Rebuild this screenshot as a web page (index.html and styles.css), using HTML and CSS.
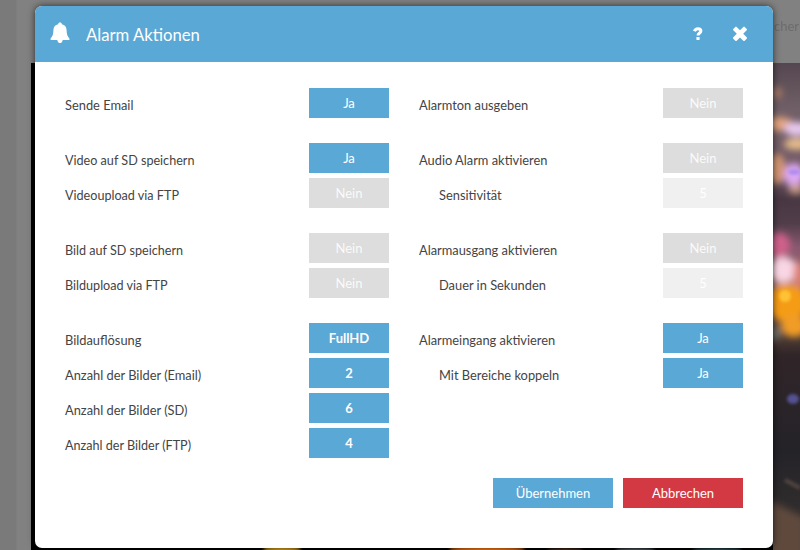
FILE: index.html
```
<!DOCTYPE html>
<html lang="de">
<head>
<meta charset="utf-8">
<title>Alarm Aktionen</title>
<link rel="stylesheet" href="styles.css">
</head>
<body>
<div class="backdrop">
  <div class="nav-text">cher</div>
  <svg class="scene" width="800" height="550" viewBox="0 0 800 550" aria-hidden="true">
    <defs>
      <filter id="soft" x="-60%" y="-60%" width="220%" height="220%"><feGaussianBlur stdDeviation="3.5"/></filter>
      <filter id="edge" x="-60%" y="-60%" width="220%" height="220%"><feGaussianBlur stdDeviation="1.5"/></filter>
      <linearGradient id="sky" x1="0" y1="62" x2="0" y2="550" gradientUnits="userSpaceOnUse">
        <stop offset="0" stop-color="#544650"/><stop offset=".1" stop-color="#716067"/>
        <stop offset=".22" stop-color="#755b67"/><stop offset=".28" stop-color="#483743"/>
        <stop offset=".33" stop-color="#503d49"/><stop offset=".38" stop-color="#8a5870"/>
        <stop offset=".48" stop-color="#a37263"/><stop offset=".54" stop-color="#61493b"/>
        <stop offset=".6" stop-color="#302528"/><stop offset=".8" stop-color="#242328"/>
        <stop offset=".92" stop-color="#312d2d"/><stop offset="1" stop-color="#3c332f"/>
      </linearGradient>
      <clipPath id="strip"><rect x="773" y="63" width="27" height="487"/></clipPath>
    </defs>
    <rect x="31" y="63" width="769" height="487" fill="#000"/>
    <g clip-path="url(#strip)">
      <rect x="773" y="62" width="27" height="488" fill="url(#sky)"/>
      <g filter="url(#soft)">
        <ellipse cx="777" cy="93" rx="5" ry="6" fill="#a77964"/>
        <ellipse cx="779" cy="124" rx="14" ry="7" fill="#e2a37b"/>
        <ellipse cx="797" cy="129" rx="13" ry="7" fill="#e7c9ef"/>
        <ellipse cx="797" cy="144" rx="13" ry="6" fill="#e6bd8b"/>
        <ellipse cx="777" cy="169" rx="9" ry="15" fill="#d0946f"/>
        <ellipse cx="794" cy="175" rx="10" ry="12" fill="#dda9f4"/>
        <ellipse cx="796" cy="189" rx="8" ry="5" fill="#c79b84"/>
        <ellipse cx="779" cy="245" rx="11" ry="12" fill="#cf608a"/>
        <ellipse cx="783" cy="270" rx="14" ry="13" fill="#f9d6e4"/>
        <ellipse cx="799" cy="275" rx="6" ry="13" fill="#dd8074"/>
        <ellipse cx="787" cy="303" rx="20" ry="19" fill="#f59c16"/>
        <ellipse cx="794" cy="326" rx="13" ry="11" fill="#f09c26"/>
        <ellipse cx="775" cy="333" rx="6" ry="7" fill="#68706a"/>
        <path d="M768 500L805 518V560H768Z" fill="#5f483c"/>
      </g>
      <g filter="url(#edge)">
        <ellipse cx="794" cy="172" rx="6" ry="3" fill="#b18cef"/>
        <ellipse cx="785" cy="296" rx="6" ry="6" fill="#ffc235"/>
        <ellipse cx="793" cy="399" rx="6" ry="5" fill="#535191"/>
        <path d="M785 480L800 488" stroke="#504440" stroke-width="4"/>
      </g>
    </g>
    <g filter="url(#edge)">
      <ellipse cx="282" cy="549" rx="19" ry="3" fill="#e0a51c"/>
      <ellipse cx="487" cy="549" rx="38" ry="3" fill="#ff7b18"/>
      <ellipse cx="565" cy="550" rx="18" ry="2" fill="#583322"/>
      <ellipse cx="635" cy="550" rx="20" ry="2" fill="#5c6c72"/>
      <ellipse cx="717" cy="550" rx="25" ry="2" fill="#37646c"/>
    </g>
  </svg>
</div>

<main class="dialog">
  <header class="bar">
    <svg class="bell" width="20" height="22" viewBox="0 0 20 22" aria-hidden="true"><path fill="#fff" d="M10 .6C8.800.6 8.200 1.300 8.200 2.300C5 2.900 3.500 5.300 3.400 8.200C3.300 12 2.700 14.400.600 16.400V18H7.300C7.600 20.100 8.600 21.100 10 21.100S12.400 20.100 12.700 18H19.400V16.400C17.300 14.400 16.700 12 16.600 8.200C16.500 5.300 15 2.900 11.800 2.300C11.800 1.300 11.200.6 10 .6Z"/></svg>
    <h1 class="title">Alarm Aktionen</h1>
    <svg class="help" width="10" height="14" viewBox="0 0 10 14" aria-hidden="true"><path d="M1.400 4.300C2 2.500 3.200 1.700 4.900 1.700C6.900 1.700 7.900 2.700 7.900 4C7.900 6.100 5 5.900 5 8.600" fill="none" stroke="#fff" stroke-width="3"/><rect x="3.400" y="10" width="3.200" height="3" rx=".4" fill="#fff"/></svg>
    <svg class="close" width="16" height="16" viewBox="0 0 16 16" aria-hidden="true"><path d="M4.700.9L8 4.200L11.300.9Q12 .3 12.700.9L14.700 2.900Q15.400 3.600 14.700 4.300L11.200 7.800L14.700 11.300Q15.400 12 14.700 12.700L12.700 14.700Q12 15.300 11.300 14.700L8 11.400L4.700 14.700Q4 15.300 3.300 14.700L1.300 12.700Q.6 12 1.300 11.300L4.800 7.800L1.300 4.300Q.6 3.600 1.300 2.900L3.300.9Q4 .3 4.700.9Z" fill="#fff"/></svg>
  </header>
  <div class="content">
    <div class="columns">
      <section class="column">
        <div class="group">
          <div class="row"><span class="label">Sende Email</span><button class="value">Ja</button></div>
        </div>
        <div class="group">
          <div class="row"><span class="label tight">Video auf SD speichern</span><button class="value">Ja</button></div>
          <div class="row"><span class="label tight">Videoupload via FTP</span><button class="value off">Nein</button></div>
        </div>
        <div class="group">
          <div class="row"><span class="label tight">Bild auf SD speichern</span><button class="value off">Nein</button></div>
          <div class="row"><span class="label tight">Bildupload via FTP</span><button class="value off">Nein</button></div>
        </div>
        <div class="group">
          <div class="row"><span class="label">Bildauflösung</span><button class="value strong">FullHD</button></div>
          <div class="row"><span class="label">Anzahl der Bilder (Email)</span><button class="value strong">2</button></div>
          <div class="row"><span class="label">Anzahl der Bilder (SD)</span><button class="value strong">6</button></div>
          <div class="row"><span class="label tight">Anzahl der Bilder (FTP)</span><button class="value strong">4</button></div>
        </div>
      </section>
      <section class="column">
        <div class="group">
          <div class="row"><span class="label">Alarmton ausgeben</span><button class="value off">Nein</button></div>
        </div>
        <div class="group">
          <div class="row"><span class="label">Audio Alarm aktivieren</span><button class="value off">Nein</button></div>
          <div class="row sub"><span class="label">Sensitivität</span><button class="value faint">5</button></div>
        </div>
        <div class="group">
          <div class="row"><span class="label">Alarmausgang aktivieren</span><button class="value off">Nein</button></div>
          <div class="row sub"><span class="label">Dauer in Sekunden</span><button class="value faint">5</button></div>
        </div>
        <div class="group">
          <div class="row"><span class="label">Alarmeingang aktivieren</span><button class="value">Ja</button></div>
          <div class="row sub"><span class="label">Mit Bereiche koppeln</span><button class="value">Ja</button></div>
        </div>
      </section>
    </div>
    <footer class="actions">
      <button class="action">Übernehmen</button>
      <button class="action cancel">Abbrechen</button>
    </footer>
  </div>
</main>
</body>
</html>
```
FILE: styles.css
```
* { box-sizing: border-box; }
body {
  margin: 0;
  height: 550px;
  overflow: hidden;
  padding: 6px 27px 2px 35px;
  font-family: Lato, "Open Sans", sans-serif;
  background: #7f7f7f;
}
.backdrop {
  position: absolute;
  inset: 0;
  overflow: hidden;
  background: linear-gradient(90deg, #7a7a7a 16px, #818181 17px);
}
.scene { position: absolute; inset: 0; }
.nav-text {
  position: absolute;
  left: 774px;
  top: 18px;
  font-size: 13px;
  line-height: 16px;
  color: #6c6c6c;
  filter: blur(.6px);
}
.dialog {
  position: relative;
  height: 542px;
  border-radius: 7px;
  background: #fff;
  box-shadow: 0 0 7px rgba(0, 0, 0, .65);
  overflow: hidden;
}
.bar {
  display: flex;
  align-items: center;
  height: 56px;
  padding: 0 25px 0 15px;
  background: #5aa8d6;
}
.bell { margin-top: -3px; }
.title {
  margin: 1px 0 0 16px;
  font-size: 16.7px;
  font-weight: 400;
  line-height: 24px;
  color: #fff;
}
.help { margin-left: auto; }
.close { margin-left: 29px; margin-top: -1px; }
.content { padding: 26px 30px 0; }
.columns { display: grid; grid-template-columns: 324px 324px; gap: 30px; }
.column { display: flex; flex-direction: column; gap: 25px; }
.group { display: flex; flex-direction: column; gap: 5px; }
.row { display: flex; justify-content: space-between; height: 30px; }
.row.sub { padding-left: 20px; }
.label {
  padding-top: 2px;
  font-size: 12.85px;
  line-height: 30px;
  color: #444;
  white-space: nowrap;
}
.label.tight { padding-top: 3px; font-size: 12.6px; }
button {
  border: 0;
  padding: 0;
  font-family: inherit;
  font-size: 13px;
  line-height: 30px;
  color: #fff;
  background: #5aa8d6;
}
.value { width: 80px; height: 30px; }
.value.off { background: #ddd; color: #fafafa; }
.value.faint { background: #f0f0f0; color: #fff; }
.value.strong { font-weight: 700; }
.actions { display: flex; justify-content: flex-end; gap: 10px; margin-top: 20px; }
.action { width: 120px; height: 30px; }
.cancel { background: #d23943; }
```
